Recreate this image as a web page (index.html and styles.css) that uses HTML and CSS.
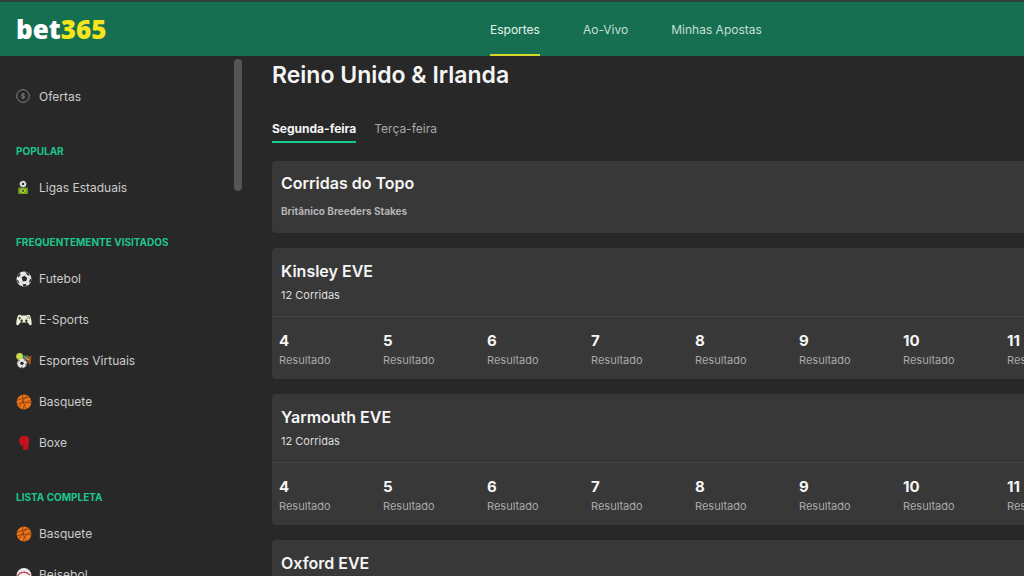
FILE: index.html
```html
<!DOCTYPE html>
<html lang="pt-BR">
<head>
<meta charset="utf-8">
<meta name="viewport" content="width=device-width, initial-scale=1">
<title>bet365</title>
<link rel="stylesheet" href="styles.css">
</head>
<body>
<svg class="sprite" aria-hidden="true">
  <symbol id="football" viewBox="0 0 16 16">
    <circle cx="8" cy="8" r="7.5" fill="#e9e9e9"/>
    <path d="M5.6 6.2 8.6 4.8l2.6 2.1-1 3.2-3.4.3zM1 5.2 3.6 2.3l1.1 1.2-1.9 2.7zM9 .7l3.6 1.6 1 2.4-2.2-.5zM15.3 7.2l-.4 3.4-1.7 1.6.2-3.2zM6.4 13.2l3.4-.3 1 1.5-3 1.1zM.6 8.6l1.9 1.2 1 2.8-1.5-1.1z" fill="#282828"/>
    <path d="M5.6 6.2 3.7 4.8M8.6 4.8l1.2-2.2M11.2 6.9l2.5.1M10.2 10.1l1.2 2.4M6.8 10.4l-1.6 2.2" stroke="#a5a5a5" stroke-width=".5" fill="none"/>
  </symbol>
  <symbol id="basketball" viewBox="0 0 16 16">
    <circle cx="8" cy="8" r="7.4" fill="#ed741a"/>
    <path d="M1 6.400C5 4.800 10 3.400 13.400 3.200M.9 10.200c4.500-2.200 9.500-2.700 14.300-1.200M6.700.8c-.5 4 .8 9.500 3.400 14.200M11 1.500C8.500 4.500 4.500 9.500 3.200 13.500M14.900 6.200c-3 .8-6.800 4.100-8 8.900" stroke="#70350f" stroke-width=".7" fill="none"/>
  </symbol>
</svg>
<header class="topbar">
  <a class="logo" href="#">bet<span class="logo-number">365</span></a>
  <nav class="topnav">
    <a class="topnav-link topnav-link-active" href="#">Esportes</a>
    <a class="topnav-link" href="#">Ao-Vivo</a>
    <a class="topnav-link" href="#">Minhas Apostas</a>
  </nav>
</header>
<div class="layout">
  <aside class="sidebar">
    <nav class="menu">
      <a class="menu-item" href="#"><svg class="icon" viewBox="0 0 16 16"><circle cx="7" cy="7" r="6.300" fill="none" stroke="#8c8c8c" stroke-width=".9"/><path d="M8.700 5.400C8.300 4.500 5.500 4.500 5.500 5.900c0 1.300 3.200.8 3.200 2.200 0 1.300-2.900 1.300-3.300.2M7 4v6" fill="none" stroke="#8c8c8c" stroke-width=".8"/></svg>Ofertas</a>
      <h2 class="menu-heading">Popular</h2>
      <a class="menu-item" href="#"><svg class="icon" viewBox="0 0 16 16"><circle cx="7" cy="4" r="3.300" fill="#dedede"/><path d="m6 3.200 1.500-.4.900 1.300-1 1.200-1.500-.5zM4 2l1.500-1 .2 1zM9 1.300l1 1.300-1.200-.2zM4.200 5.400l1 .3.500 1.200z" fill="#282828"/><path d="M2.300 7.600h9.600V14H2.300z" fill="#71a822"/><path d="m7.100 8.300 3.400 2.400-3.400 2.500-3.500-2.500z" fill="#c5d42d"/><circle cx="7.100" cy="10.800" r="1.300" fill="#366064"/></svg>Ligas Estaduais</a>
      <h2 class="menu-heading">Frequentemente visitados</h2>
      <a class="menu-item" href="#"><svg class="icon"><use href="#football"/></svg>Futebol</a>
      <a class="menu-item" href="#"><svg class="icon" viewBox="0 0 16 16"><path d="M2.200 3.300c.7-1 2.700-.8 3.200.1h5.200c.5-.9 2.500-1.100 3.200-.1 1.100 2 2 6 1.900 8.500 0 1.500-1.300 2-2.300.9l-2.200-2.800c-1.400.8-5 .8-6.400 0l-2.200 2.800c-1 1.100-2.300.6-2.300-.9-.1-2.500.8-6.500 1.900-8.500z" fill="#eeeed7"/><path d="M3.700 4.600v3M2.200 6.100h3" stroke="#282828" stroke-width=".8"/><circle cx="5.700" cy="8.700" r="1.200" fill="#39362a"/><circle cx="10.300" cy="8.700" r="1.200" fill="#39362a"/><circle cx="12.300" cy="4.800" r=".7" fill="#599b63"/><circle cx="13.400" cy="6" r=".7" fill="#bd4d43"/><circle cx="11.300" cy="6" r=".7" fill="#5687a9"/></svg>E-Sports</a>
      <a class="menu-item" href="#"><svg class="icon" viewBox="0 0 16 16"><path d="M6 2.300h6l1 4H7z" fill="#267957"/><path d="M9 4.300 12 3l3.700.6-.7 1.900-.2 4.600-1.400 2.800-.6-4-1.700 2.100.5-3.500-2.500-1z" fill="#a45b20"/><path d="m8.500 4 2 1.500M11 6l2 1" stroke="#d5dcd8" stroke-width=".8"/><circle cx="3.600" cy="3.400" r="3.400" fill="#c3d73d"/><path d="M.8 3.500c2-.2 3.500-1 3.800-3" stroke="#e3eba2" stroke-width=".6" fill="none"/><circle cx="6" cy="10.400" r="4.800" fill="#e5e5e5"/><path d="m4.700 9 2.300-.3.900 1.800-1.700 1.800-2-1.200zM1.700 8.600l1.700-1.700.2 1.400zM7.600 6l2.200 1.700-1.500-.1zM10.600 10l-.5 2.700-.9-1zM4.500 14l2.400-.2-.6 1.300z" fill="#282828"/></svg>Esportes Virtuais</a>
      <a class="menu-item" href="#"><svg class="icon"><use href="#basketball"/></svg>Basquete</a>
      <a class="menu-item" href="#"><svg class="icon" viewBox="0 0 16 16"><path d="M4.200 2.300C6 .5 10.500.5 12 2c1.200 1.300 1.300 4.600.7 7.100l-.2 4.900c-1.500 1-4.200 1.200-5.400.3l-.3-3.900c-1.700-.2-3.300-1.500-3.400-3.500-.1-1.800.1-3.700.8-4.600z" fill="#cb1119"/><path d="M7.400 6.700c1.200 1.200.7 2.700-.7 3.500M7 11c1.900.5 3.800.3 5.600-.4M5.200 3.800c1 .7 2 .7 2.700.4" fill="none" stroke="#87131a" stroke-width=".7"/></svg>Boxe</a>
      <h2 class="menu-heading">Lista completa</h2>
      <a class="menu-item" href="#"><svg class="icon"><use href="#basketball"/></svg>Basquete</a>
      <a class="menu-item" href="#"><svg class="icon" viewBox="0 0 16 16"><circle cx="8" cy="8.500" r="7.400" fill="#f1eeee"/><path d="M1.500 9C4 4.500 10 4 14 8" fill="none" stroke="#b93448" stroke-width="1.100"/><path d="m3.200 5.600.8 1.500M5.800 4.300l.3 1.700M8.700 4.100l-.2 1.700M11.500 5.100l-.8 1.400" stroke="#b93448" stroke-width=".6"/></svg>Beisebol</a>
    </nav>
    <div class="scroll-track"><div class="scroll-thumb"></div></div>
  </aside>
  <main class="content">
    <h1 class="title">Reino Unido &amp; Irlanda</h1>
    <nav class="tabs">
      <button class="tab tab-active" type="button">Segunda-feira</button>
      <button class="tab" type="button">Terça-feira</button>
    </nav>
    <section class="card card-feature">
      <h2 class="card-title">Corridas do Topo</h2>
      <p class="card-note">Britânico Breeders Stakes</p>
    </section>
    <section class="card">
      <div class="card-head"><h2 class="card-title">Kinsley EVE</h2><p class="card-count">12 Corridas</p></div>
      <div class="races">
        <a class="race" href="#"><b class="race-number">4</b>Resultado</a>
        <a class="race" href="#"><b class="race-number">5</b>Resultado</a>
        <a class="race" href="#"><b class="race-number">6</b>Resultado</a>
        <a class="race" href="#"><b class="race-number">7</b>Resultado</a>
        <a class="race" href="#"><b class="race-number">8</b>Resultado</a>
        <a class="race" href="#"><b class="race-number">9</b>Resultado</a>
        <a class="race" href="#"><b class="race-number">10</b>Resultado</a>
        <a class="race" href="#"><b class="race-number">11</b>Resultado</a>
      </div>
    </section>
    <section class="card">
      <div class="card-head"><h2 class="card-title">Yarmouth EVE</h2><p class="card-count">12 Corridas</p></div>
      <div class="races">
        <a class="race" href="#"><b class="race-number">4</b>Resultado</a>
        <a class="race" href="#"><b class="race-number">5</b>Resultado</a>
        <a class="race" href="#"><b class="race-number">6</b>Resultado</a>
        <a class="race" href="#"><b class="race-number">7</b>Resultado</a>
        <a class="race" href="#"><b class="race-number">8</b>Resultado</a>
        <a class="race" href="#"><b class="race-number">9</b>Resultado</a>
        <a class="race" href="#"><b class="race-number">10</b>Resultado</a>
        <a class="race" href="#"><b class="race-number">11</b>Resultado</a>
      </div>
    </section>
    <section class="card">
      <div class="card-head"><h2 class="card-title">Oxford EVE</h2></div>
    </section>
  </main>
</div>
</body>
</html>
```
FILE: styles.css
```css
* { box-sizing: border-box; }
body {
  display: flex;
  flex-direction: column;
  height: 100vh;
  margin: 0;
  overflow: hidden;
  background: #282828;
  color: #f5f5f5;
  font: 12px/20px Inter, "Liberation Sans", sans-serif;
}
h1, h2, p { margin: 0; }
a { color: inherit; text-decoration: none; }
.sprite { display: none; }

.topbar {
  display: grid;
  grid-template-columns: 474px 1fr;
  flex: none;
  height: 56px;
  padding-left: 16px;
  border-top: 2px solid #30403b;
  background: #176f52;
}
.logo {
  align-self: center;
  color: #ffffff;
  font: 800 26px/32px "Open Sans", "Noto Sans", sans-serif;
}
.logo-number { color: #f5e51b; }
.topnav { display: flex; gap: 43px; }
.topnav-link {
  display: flex;
  align-items: center;
  padding-top: 3px;
  border-bottom: 2px solid transparent;
  color: #c3dfd5;
}
.topnav-link-active { border-color: #d8d827; color: #e5f3ed; }

.layout { display: flex; flex: 1; min-height: 0; }
.sidebar { display: flex; flex: none; width: 242px; }
.menu { flex: 1; padding: 20px 0 0 16px; overflow: hidden; }
.menu-item {
  display: flex;
  align-items: center;
  gap: 7px;
  height: 41px;
  color: #cccccc;
}
.icon { flex: none; width: 16px; height: 16px; }
.menu-heading {
  padding: 26px 0 8px;
  color: #1cc58c;
  font-size: 10px;
  font-weight: 700;
  line-height: 16px;
  text-transform: uppercase;
  white-space: nowrap;
}
.scroll-track { flex: none; width: 8px; padding-top: 3px; }
.scroll-thumb { height: 132px; border-radius: 4px; background: #555555; }

.content { flex: 1; min-width: 0; padding-left: 30px; overflow: hidden; }
.title { padding-top: 4px; font-size: 23px; font-weight: 600; line-height: 30px; }
.tabs { display: flex; gap: 18px; padding: 29px 0 18px; }
.tab {
  padding: 0 0 2px;
  border: 0;
  border-bottom: 2px solid transparent;
  background: none;
  color: #a8a8a8;
  font: inherit;
}
.tab-active { border-color: #18c98f; color: #f5f5f5; font-weight: 700; }

.card {
  margin-bottom: 15px;
  border-radius: 4px 0 0 4px;
  background: #383838;
  overflow: hidden;
}
.card-feature { padding: 11px 9px 14px; }
.card-head { padding: 12px 9px; border-bottom: 1px solid #444444; }
.card-title { font-size: 16px; font-weight: 600; line-height: 22px; }
.card-note {
  padding-top: 9px;
  color: #b4b4b4;
  font-size: 10px;
  font-weight: 700;
  line-height: 16px;
}
.card-count { padding-top: 4px; color: #dddddd; font-size: 11px; line-height: 18px; }
.races { display: grid; grid-auto-flow: column; grid-auto-columns: 104px; padding: 13px 0 10px 7px; }
.race { color: #a8a8a8; font-size: 11px; line-height: 18px; }
.race-number { display: block; color: #f5f5f5; font-size: 15px; font-weight: 700; line-height: 21px; }
```
